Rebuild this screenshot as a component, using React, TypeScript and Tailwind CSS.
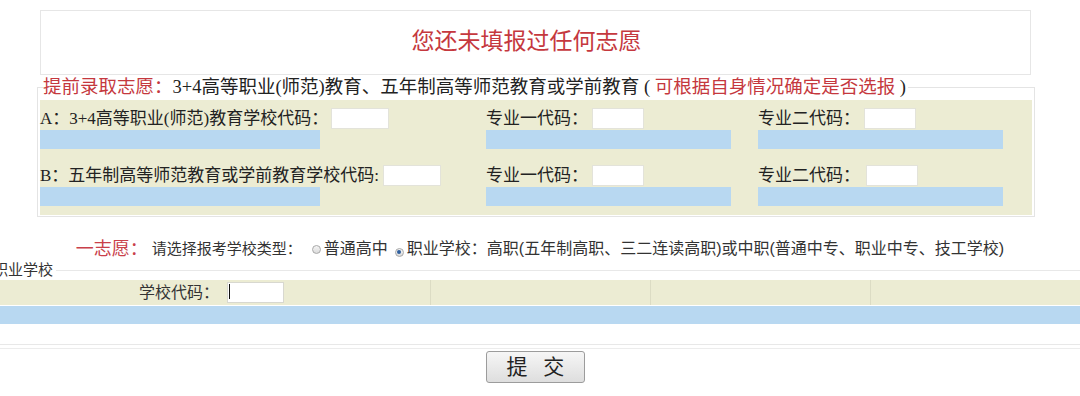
import React from 'react';

// SimSun is not available: Latin in Times widths, CJK in Noto Sans CJK SC
const SERIF = "font-['Liberation_Serif','Noto_Sans_CJK_SC',serif]";
const SANS = "font-['Liberation_Sans','Noto_Sans_CJK_SC',sans-serif]";

interface FieldProps {
    label: string;
    labelW: string;
    inputW: string;
    barW: string;
}

const Field: React.FC<FieldProps> = ({ label, labelW, inputW, barW }) => (
    <div className="flex flex-col">
        <div className="flex items-center h-[22px]">
            <span className={`${labelW} whitespace-nowrap text-[17px] leading-none text-[#222]`}>{label}</span>
            <input type="text" className={`${inputW} h-[21px] bg-white border border-[#e3e3da] outline-none`} />
        </div>
        <div className={`${barW} h-[19px] mt-[1px] bg-[#b8d8f1]`} />
    </div>
);

const rows: FieldProps[][] = [
    [
        { label: 'A：3+4高等职业(师范)教育学校代码：', labelW: 'w-[291px]', inputW: 'w-[58px]', barW: 'w-[280px]' },
        { label: '专业一代码：', labelW: 'w-[106px]', inputW: 'w-[52px]', barW: 'w-[245px]' },
        { label: '专业二代码：', labelW: 'w-[106px]', inputW: 'w-[52px]', barW: 'w-[245px]' },
    ],
    [
        { label: 'B：五年制高等师范教育或学前教育学校代码:', labelW: 'w-[343px]', inputW: 'w-[58px]', barW: 'w-[280px]' },
        { label: '专业一代码：', labelW: 'w-[106px]', inputW: 'w-[52px]', barW: 'w-[245px]' },
        { label: '专业二代码：', labelW: 'w-[108px]', inputW: 'w-[52px]', barW: 'w-[245px]' },
    ],
];

const Radio: React.FC<{ checked?: boolean }> = ({ checked }) => (
    <span className="inline-flex items-center justify-center w-[9px] h-[9px] rounded-full border border-[#a8a8a8] bg-gradient-to-b from-[#f4f4f4] to-[#dcdcdc]">
        {checked && <span className="w-[4px] h-[4px] rounded-full bg-[#2f5f9e]" />}
    </span>
);

export default function App() {
    return (
        <div className={`w-[1080px] h-[396px] overflow-hidden bg-white pt-[10px] ${SERIF}`}>
            {/* status box */}
            <div className="ml-[40px] w-[991px] h-[65px] border border-[#e6e6e6] flex items-center justify-center pr-[18px] pb-[2px]">
                <span className="text-[23px] leading-none text-[#c5383e]">您还未填报过任何志愿</span>
            </div>

            {/* early admission */}
            <fieldset className="ml-[37px] mt-[1px] w-[998px] border border-[#e4e4e4] px-[2px] pb-[1px]">
                <legend className="ml-[3px] pr-[2px] text-[18.5px] leading-[22px] whitespace-nowrap text-[#222]">
                    <span className="text-[#c5383e]">提前录取志愿：</span>
                    3+4高等职业(师范)教育、五年制高等师范教育或学前教育 (
                    <span className="text-[#c5383e]"> 可根据自身情况确定是否选报 </span>)
                </legend>
                <div className="mt-[2px] bg-[#ececd3] h-[115px] pt-[7px]">
                    {rows.map((row, i) => (
                        <div key={i} className={`grid grid-cols-[446px_272px_1fr] ${i === 0 ? 'h-[57px]' : ''}`}>
                            {row.map((f, j) => (
                                <Field key={j} {...f} />
                            ))}
                        </div>
                    ))}
                </div>
            </fieldset>

            {/* first choice */}
            <div className={`mt-[21px] h-[22px] flex items-center justify-center ${SANS} text-[16px] text-[#333]`}>
                <span className={`${SERIF} text-[18px] text-[#c9404a]`}>一志愿：</span>
                <span className="ml-[4px] text-[15px]">请选择报考学校类型：</span>
                <span className="ml-[10px]"><Radio /></span>
                <span className="ml-[3px]">普通高中</span>
                <span className="ml-[7px]"><Radio checked /></span>
                <span className="ml-[3px]">职业学校：高职(五年制高职、三二连读高职)或中职(普通中专、职业中专、技工学校)</span>
            </div>

            <fieldset className={`ml-[-10px] w-[1100px] border border-[#e8e8e8] pb-[20px] ${SANS}`}>
                <legend className="ml-[2px] pr-[3px] text-[15px] leading-[20px] text-[#333]">职业学校</legend>
                <div className="grid grid-cols-[236px_203px_220px_220px_1fr] h-[25px] bg-[#ececd3]">
                    <div className="flex items-center justify-end pr-[8px] text-[16px] text-[#333]">学校代码：</div>
                    <div className="flex items-center">
                        <div className="relative">
                            <input type="text" className="w-[57px] h-[21px] bg-white border border-[#d8d8d0] outline-none" />
                            <span className="absolute left-[2px] top-[3px] w-px h-[15px] bg-[#111]" />
                        </div>
                    </div>
                    <div className="border-l border-[#dcdcc4]" />
                    <div className="border-l border-[#dcdcc4]" />
                    <div className="border-l border-[#dcdcc4]" />
                </div>
                <div className="mt-[1px] h-[18px] bg-[#b8d8f1]" />
            </fieldset>
            <div className="mt-[3px] h-px bg-[#ececec]" />

            <button
                type="button"
                className="ml-[486px] mt-[2px] w-[99px] h-[32px] rounded-[3px] border border-[#9c9c9c] bg-gradient-to-b from-[#f6f6f6] to-[#dedede] text-[21px] leading-none text-[#222] tracking-[0.25em] pl-[5px]"
            >
                提 交
            </button>
        </div>
    );
}
